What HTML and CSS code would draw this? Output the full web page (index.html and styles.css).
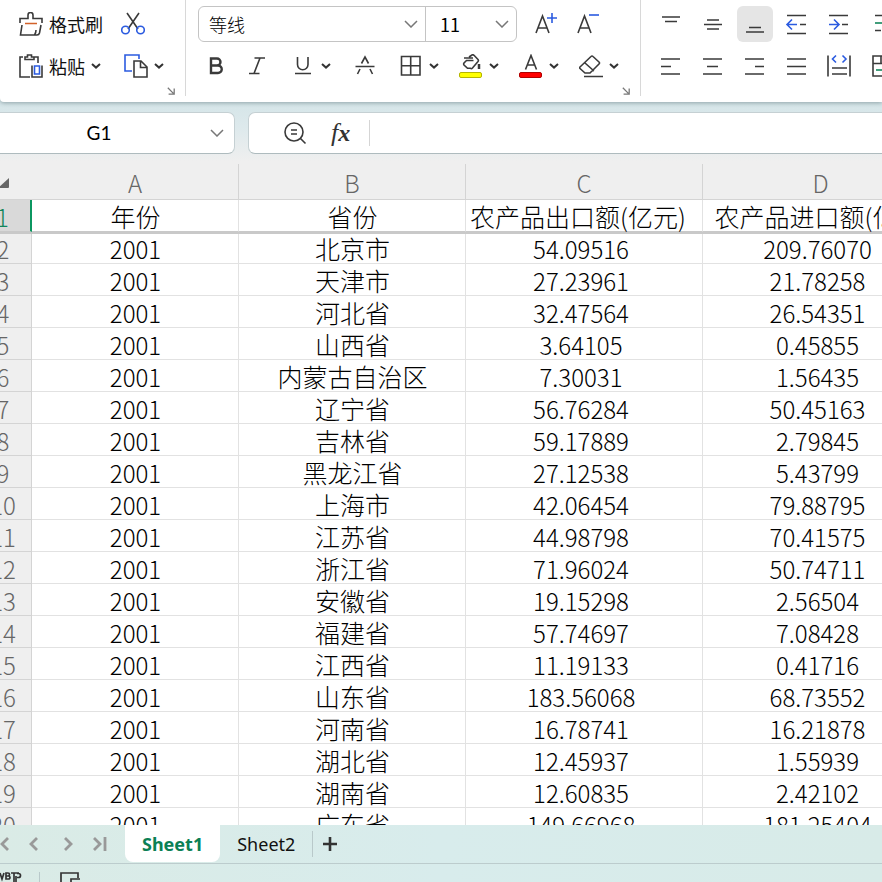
FILE: index.html
```
<!DOCTYPE html>
<html lang="zh-CN">
<head>
<meta charset="utf-8">
<title>Sheet1</title>
<link rel="stylesheet" href="styles.css">
</head>
<body>
<svg class="defs" aria-hidden="true">
  <symbol id="chev" viewBox="0 0 10 6"><path d="M1 1l4 3.600L9 1" fill="none" stroke="#333" stroke-width="2"/></symbol>
  <symbol id="wide-chev" viewBox="0 0 14 8"><path d="M1 1l6 6 6-6" fill="none" stroke="#777" stroke-width="1.500"/></symbol>
  <symbol id="launch" viewBox="0 0 10 10"><path d="M1 1l7 7M9 2v7H2" fill="none" stroke="#777" stroke-width="1.600"/></symbol>
</svg>
<div class="app">
  <header class="ribbon">
    <section class="group clip">
      <div class="tools">
        <button class="tool labeled"><svg class="ico" viewBox="0 0 24 24"><path d="M1 11V6.500h8V3a2.500 2.500 0 0 1 5 0v3.500h9V11M3 13L1.500 23H18q2 0 2.500-2L22 13M15.500 23q1.500-2 1.500-5"/><path class="orange" d="M6 11.500h12"/></svg>格式刷</button>
        <button class="tool cut" aria-label="剪切"><svg class="ico" viewBox="0 0 24 24"><path d="M6 1l11 16M18 1L7 17"/><g class="blue"><circle cx="4.500" cy="18" r="3.800"/><circle cx="19.500" cy="18" r="3.800"/></g></svg></button>
      </div>
      <div class="tools">
        <button class="tool labeled"><svg class="ico" viewBox="0 0 24 24"><path d="M4 3H1v20h10M15 3h4v6M6 5.500V3h2.500V1h4v2H15v2.500zM13 11.500V23h10V11.500"/><path class="blue" d="M15.500 12h5v8h-5z"/></svg>粘贴<svg class="chev"><use href="#chev"/></svg></button>
        <button class="tool copy" aria-label="复制"><svg class="ico" viewBox="0 0 24 24"><path class="blue" d="M8 17H1V1h14v4"/><path d="M10 7h7l6 6v10H10zM16.500 7v6.500H23"/></svg><svg class="chev"><use href="#chev"/></svg></button>
      </div>
      <button class="launch" aria-label="剪贴板设置"><svg><use href="#launch"/></svg></button>
    </section>
    <section class="group font">
      <div class="tools">
        <div class="combo">
          <label class="pick family"><input aria-label="字体" value="等线"><svg><use href="#wide-chev"/></svg></label>
          <label class="pick size"><input aria-label="字号" value="11"><svg><use href="#wide-chev"/></svg></label>
        </div>
        <button class="tool grow" aria-label="增大字号"><svg class="ico" viewBox="0 0 24 24"><path d="M2 21L8.500 4 15 21M4 16h9"/><path class="blue" d="M13 6h10M18 1v10"/></svg></button>
        <button class="tool shrink" aria-label="减小字号"><svg class="ico" viewBox="0 0 24 24"><path d="M2 21L8.500 4 15 21M4 16h9"/><path class="blue" d="M13 3h10"/></svg></button>
      </div>
      <div class="tools styles">
        <button class="tool bold" aria-label="加粗"><svg class="ico" viewBox="0 0 24 24"><path d="M7 4.500h6a3.500 3.500 0 0 1 0 7H7zM7 11.500h7a3.700 3.700 0 0 1 0 7.500H7z"/></svg></button>
        <button class="tool italic" aria-label="倾斜"><svg class="ico" viewBox="0 0 24 24"><path d="M9.500 4H20M4 19.500h10.500M15 4L9 19.500"/></svg></button>
        <button class="tool under" aria-label="下划线"><svg class="ico" viewBox="0 0 24 24"><path d="M6.500 3v7.500a5.200 5.200 0 0 0 10.500 0V3M4 19.500h16"/></svg><svg class="chev"><use href="#chev"/></svg></button>
        <button class="tool strike" aria-label="删除线"><svg class="ico" viewBox="0 0 24 24"><path d="M2.500 12.500h19M8.500 9.500L12 3l3.500 6.500M7 15l-2.500 5M17 15l2.500 5"/></svg></button>
        <button class="tool border" aria-label="边框"><svg class="ico" viewBox="0 0 24 24"><path d="M2.500 2.500h18.500v18.500h-18.500zM11.700 2.500v18.500M2.500 11.700h18.500"/></svg><svg class="chev"><use href="#chev"/></svg></button>
        <button class="tool" aria-label="填充颜色"><svg class="ico" viewBox="0 0 24 24"><path d="M5 4h9M10 3l3-2q1-.6 2 .3l4 4.200q.8 1 0 2L13.500 14q-1 1-2 .3H8.500L5 11q-.7-1 0-2l2.500-2.500h7"/><path d="M20 10v5" stroke-width="2.500"/><rect class="yellow" x=".5" y="18.500" width="22" height="5" rx="1.500"/></svg><svg class="chev"><use href="#chev"/></svg></button>
        <button class="tool" aria-label="字体颜色"><svg class="ico" viewBox="0 0 24 24"><path d="M6.500 15.500L12 1.500l5.500 14M8.500 11h7"/><rect class="red" x=".5" y="18.500" width="22" height="5" rx="1.500"/></svg><svg class="chev"><use href="#chev"/></svg></button>
        <button class="tool" aria-label="清除"><svg class="ico" viewBox="0 0 24 24"><path d="M1 13L12 2.500q1-1 2 0l6 5.500q1 1 0 2L11 19H6l-5-4.500q-.8-.7 0-1.500zM6 9l9 8M5 22.500h19"/></svg><svg class="chev"><use href="#chev"/></svg></button>
      </div>
      <button class="launch" aria-label="字体设置"><svg><use href="#launch"/></svg></button>
    </section>
    <section class="group align">
      <div class="tools">
        <button class="sq" aria-label="顶端对齐"><svg class="ico" viewBox="0 0 24 24"><path d="M3 5h18M6 9.500h12"/></svg></button>
        <button class="sq" aria-label="垂直居中"><svg class="ico" viewBox="0 0 24 24"><path d="M6 8h12M3 12.500h18M6 17h12"/></svg></button>
        <button class="sq on" aria-label="底端对齐"><svg class="ico" viewBox="0 0 24 24"><path d="M6 15.500h12M3 20h18"/></svg></button>
        <button class="sq" aria-label="减少缩进"><svg class="ico" viewBox="0 0 24 24"><path d="M2 3.500h19M15 12.500h6M2 21.500h19"/><path class="blue" d="M12 12.500H2.500M7 7.500l-5 5 5 5"/></svg></button>
        <button class="sq" aria-label="增加缩进"><svg class="ico" viewBox="0 0 24 24"><path d="M2 3.500h19M15 12.500h6M2 21.500h19"/><path class="blue" d="M2 12.500h9.500M7 7.500l5 5-5 5"/></svg></button>
        <button class="sq" aria-label="自动换行"><svg class="ico" viewBox="0 0 24 24"><path d="M6 3.500h16M6 18.500h6"/><path class="green" d="M6 11h16"/></svg></button>
      </div>
      <div class="tools">
        <button class="sq" aria-label="左对齐"><svg class="ico" viewBox="0 0 24 24"><path d="M2 5h19M2 12.500h10M2 20h19"/></svg></button>
        <button class="sq" aria-label="水平居中"><svg class="ico" viewBox="0 0 24 24"><path d="M2 5h19M6 12.500h11M2 20h19"/></svg></button>
        <button class="sq" aria-label="右对齐"><svg class="ico" viewBox="0 0 24 24"><path d="M2 5h19M12 12.500h9M2 20h19"/></svg></button>
        <button class="sq" aria-label="两端对齐"><svg class="ico" viewBox="0 0 24 24"><path d="M2 5h19M2 12.500h19M2 20h19"/></svg></button>
        <button class="sq" aria-label="分散对齐"><svg class="ico" viewBox="0 0 24 24"><path d="M1 1.500v21M23 1.500v21M5 14h15M5 20h15"/><path class="blue" d="M9 1.500L5.500 5 9 8.500M15.500 1.500L19 5l-3.500 3.500"/></svg></button>
        <button class="sq" aria-label="合并居中"><svg class="ico" viewBox="0 0 24 24"><path d="M4 2h20v20H4zM4 9.500h20M12 2v7"/><path class="green" d="M7 16h14"/></svg></button>
      </div>
    </section>
  </header>

  <div class="formula-bar">
    <label class="name-box"><input aria-label="名称框" value="G1"><svg class="name-chev"><use href="#wide-chev"/></svg></label>
    <div class="formula">
      <button class="fbtn" aria-label="查找"><svg class="ico" viewBox="0 0 24 24"><circle cx="11" cy="11" r="9"/><path d="M17.500 17.500l5 5M8 9h6M8 13h6"/></svg></button>
      <button class="fx" aria-label="插入函数"><i>f</i><b>x</b></button>
      <input class="expr" aria-label="编辑栏">
    </div>
  </div>

  <main class="grid">
    <table>
      <colgroup><col class="c-row"><col class="c-a"><col class="c-b"><col class="c-c"><col class="c-d"></colgroup>
      <thead><tr><th class="all"><svg viewBox="0 0 12 12"><path d="M12 1v9q0 1-1 1H1z"/></svg></th><th>A</th><th>B</th><th>C</th><th>D</th></tr></thead>
      <tbody>
        <tr class="first"><th>1</th><td>年份</td><td>省份</td><td>农产品出口额(亿元)</td><td>农产品进口额(亿元)</td></tr>
        <tr><th>2</th><td>2001</td><td>北京市</td><td>54.09516</td><td>209.76070</td></tr>
        <tr><th>3</th><td>2001</td><td>天津市</td><td>27.23961</td><td>21.78258</td></tr>
        <tr><th>4</th><td>2001</td><td>河北省</td><td>32.47564</td><td>26.54351</td></tr>
        <tr><th>5</th><td>2001</td><td>山西省</td><td>3.64105</td><td>0.45855</td></tr>
        <tr><th>6</th><td>2001</td><td>内蒙古自治区</td><td>7.30031</td><td>1.56435</td></tr>
        <tr><th>7</th><td>2001</td><td>辽宁省</td><td>56.76284</td><td>50.45163</td></tr>
        <tr><th>8</th><td>2001</td><td>吉林省</td><td>59.17889</td><td>2.79845</td></tr>
        <tr><th>9</th><td>2001</td><td>黑龙江省</td><td>27.12538</td><td>5.43799</td></tr>
        <tr><th>10</th><td>2001</td><td>上海市</td><td>42.06454</td><td>79.88795</td></tr>
        <tr><th>11</th><td>2001</td><td>江苏省</td><td>44.98798</td><td>70.41575</td></tr>
        <tr><th>12</th><td>2001</td><td>浙江省</td><td>71.96024</td><td>50.74711</td></tr>
        <tr><th>13</th><td>2001</td><td>安徽省</td><td>19.15298</td><td>2.56504</td></tr>
        <tr><th>14</th><td>2001</td><td>福建省</td><td>57.74697</td><td>7.08428</td></tr>
        <tr><th>15</th><td>2001</td><td>江西省</td><td>11.19133</td><td>0.41716</td></tr>
        <tr><th>16</th><td>2001</td><td>山东省</td><td>183.56068</td><td>68.73552</td></tr>
        <tr><th>17</th><td>2001</td><td>河南省</td><td>16.78741</td><td>16.21878</td></tr>
        <tr><th>18</th><td>2001</td><td>湖北省</td><td>12.45937</td><td>1.55939</td></tr>
        <tr><th>19</th><td>2001</td><td>湖南省</td><td>12.60835</td><td>2.42102</td></tr>
        <tr><th>20</th><td>2001</td><td>广东省</td><td>149.66968</td><td>181.25404</td></tr>
      </tbody>
    </table>
  </main>

  <nav class="tabs">
    <button class="nav" aria-label="第一个"><svg viewBox="0 0 18 18"><path d="M8 3L2 9l6 6"/></svg></button>
    <button class="nav" aria-label="上一个"><svg viewBox="0 0 18 18"><path d="M11 3L5 9l6 6"/></svg></button>
    <button class="nav" aria-label="下一个"><svg viewBox="0 0 18 18"><path d="M6 3l6 6-6 6"/></svg></button>
    <button class="nav" aria-label="最后一个"><svg viewBox="0 0 18 18"><path d="M2 3l6 6-6 6M13 2v14"/></svg></button>
    <button class="tab active">Sheet1</button>
    <button class="tab">Sheet2</button>
    <button class="add" aria-label="新建工作表"><svg viewBox="0 0 16 16"><path d="M8 1v14M1 8h14"/></svg></button>
  </nav>
  <footer class="status">
    <span class="macro"><svg viewBox="0 0 24 12"><path d="M0 1l2 6 2-6M6 1v6h2.500a1.500 1.500 0 0 0 0-3H6h2a1.500 1.500 0 0 0 0-3zM11 1h8M14 1v10M16 4v6M17 1.500h1.500a2 2 0 0 1 0 4H17"/></svg></span>
    <span class="screen"><svg viewBox="0 0 20 12"><path d="M1 12V1h17v5M20 7h-9v5"/></svg></span>
  </footer>
</div>
</body>
</html>
```
FILE: styles.css
```
* { box-sizing: border-box; }
body { margin: 0; font-family: "Noto Sans", "Noto Sans CJK SC", sans-serif; color: #111; }
button, input { font: inherit; color: inherit; background: none; border: 0; padding: 0; margin: 0; outline: 0; }
svg { display: block; flex: none; }
.defs { position: absolute; width: 0; height: 0; }
.app { height: 100vh; display: flex; flex-direction: column; overflow: hidden; background: #d9e8eb; }

.ico { width: 24px; height: 24px; fill: none; stroke: #3a3a3a; stroke-width: 1.6; }
.blue { stroke: #2b5be0; }
.orange { stroke: #d2622a; }
.green { stroke: #12865a; }
.yellow { fill: #ff0; stroke: #b5b500; stroke-width: 1; }
.red { fill: #f00; stroke: #b00000; stroke-width: 1; }
.chev { width: 10px; height: 6px; }

.ribbon { flex: none; display: flex; height: 102px; overflow: hidden; background: #fff; border-bottom-left-radius: 4px; box-shadow: 0 1px 4px #8fa3a8; position: relative; }
.group { flex: none; height: 96px; padding-top: 3px; border-right: 1px solid #d8d8d8; }
.clip { width: 186px; padding-left: 19px; }
.font { width: 455px; padding-left: 12px; }
.align { flex: 1; padding-left: 12px; border: 0; overflow: hidden; }
.tools { display: flex; align-items: center; height: 42px; }
.tool { display: flex; align-items: center; gap: 6px; }
.labeled { font: 18px/24px "Noto Sans CJK SC", sans-serif; }
.cut { margin-left: 18px; }
.copy { margin-left: 23px; }
.launch { display: block; margin: 0 9px 0 auto; }
.launch svg { width: 10px; height: 8px; }
.combo { display: flex; width: 319px; height: 36px; border: 1px solid #c4c4c4; border-radius: 6px; }
.pick { display: flex; align-items: center; padding: 0 7px 0 10px; font: 300 18px/24px "Noto Sans CJK SC", sans-serif; color: #000; }
.pick input { flex: 1; min-width: 0; }
.pick svg { width: 14px; height: 8px; }
.family { flex: 1; min-width: 0; }
.size { flex: none; width: 91px; padding-left: 14px; border-left: 1px solid #c4c4c4; font-weight: 400; }
.grow { margin-left: 17px; }
.shrink { margin-left: 18px; }
.styles { gap: 20px; padding-left: 6px; }
.bold .ico { stroke-width: 2.4; }
.italic { margin-left: -3px; }
.under { margin-left: 2px; }
.strike, .border { margin-left: 2px; }
.align .tools { gap: 6px; }
.sq { flex: none; display: grid; place-items: center; width: 36px; height: 36px; border-radius: 6px; }
.on { background: #e5e5e5; }

.formula-bar { flex: none; display: flex; gap: 13px; height: 62px; padding: 10px 0; background: linear-gradient(#d5e5e8, #dde9ec 40%, #efefef 95%); }
.name-box, .formula { display: flex; align-items: center; height: 42px; background: #fff; border: 1px solid #c5d0d3; border-bottom-color: #aebbbe; }
.name-box { width: 235px; border-left: 0; border-radius: 0 7px 7px 0; padding-right: 10px; }
.name-box input { flex: 1; min-width: 0; padding-right: 12px; text-align: center; font: 19px/24px Lato, sans-serif; color: #000; }
.name-chev { width: 14px; height: 8px; }
.formula { flex: 1; border-right: 0; border-radius: 7px 0 0 7px; padding-left: 34px; }
.fx { margin-left: 24px; font: 26px/24px "Liberation Serif", serif; color: #333; }
.fx b { font-style: italic; font-size: 24px; }
.expr { flex: 1; min-width: 0; height: 26px; margin-left: 19px; border-left: 1px solid #d5d5d5; }

.grid { flex: 1; min-height: 0; overflow: hidden; background: #fff; }
table { table-layout: fixed; width: 964px; margin-left: -25px; border-collapse: separate; border-spacing: 0; font-family: "Noto Sans CJK SC", sans-serif; font-weight: 300; }
.c-row { width: 57px; }
.c-a { width: 207px; }
.c-b { width: 227px; }
.c-c { width: 237px; }
.c-d { width: 236px; }
th, td { height: 32px; padding: 2px 0 0; border-right: 1px solid #e2e2e2; border-bottom: 1px solid #e2e2e2; text-align: center; white-space: nowrap; font-size: 24px; line-height: 29px; color: #000; }
td { padding-left: 1px; }
th { background: #efefef; color: #666; font-weight: 300; border-color: #d4d4d4; }
thead th { height: 36px; line-height: 33px; }
thead .all { border-right: 0; }
.all svg { width: 12px; height: 12px; margin-left: 22px; fill: #666; }
td:nth-child(3), .first td { font-size: 25px; }
td:nth-child(n+4) { padding-right: 7px; }
.first td:nth-child(4) { padding-left: 4px; padding-right: 0; text-align: left; }
.first td:nth-child(5) { padding-left: 4px; padding-right: 0; }
.first th, .first td { position: relative; box-shadow: 0 2px #c9c9c9; border-bottom-color: #c9c9c9; }
.first th { background: #d9d9d9; color: #12865a; border-right: 2px solid #0b9660; }

.tabs { flex: none; display: flex; height: 39px; background: linear-gradient(90deg, #daebe6, #d8ecec 50%, #d8ebe8); border-bottom: 1px solid #bccccd; }
.nav { width: 33px; height: 38px; display: grid; place-items: center; }
.nav:first-child { width: 18px; }
.nav svg { width: 18px; height: 18px; fill: none; stroke: #999; stroke-width: 2.8; }
.tab { height: 38px; padding: 0 17px; font-size: 18px; line-height: 24px; }
.active { margin-left: 8px; height: 37px; background: #fff; border-radius: 0 0 8px 8px; color: #0b8055; font-weight: 700; }
.add { height: 26px; margin-top: 6px; padding-left: 9px; border-left: 1px solid #b9c9ca; }
.add svg { width: 16px; height: 16px; fill: none; stroke: #333; stroke-width: 2.6; }
.status { flex: none; display: flex; height: 18px; padding-top: 8px; overflow: hidden; background: linear-gradient(90deg, #daebe6, #d8ecec 50%, #d8ebe8); }
.status svg { fill: none; stroke: #333; stroke-width: 1.7; }
.macro { width: 40px; border-right: 1px solid #b9c9ca; }
.macro svg { width: 24px; height: 12px; }
.screen { margin-left: 20px; }
.screen svg { width: 20px; height: 12px; }
```
